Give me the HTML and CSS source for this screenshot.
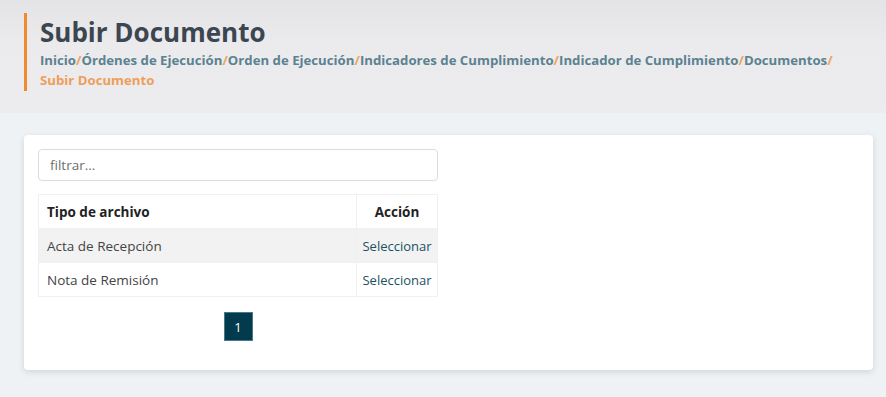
FILE: index.html
```html
<!DOCTYPE html>
<html lang="es">
<head>
  <meta charset="UTF-8" />
  <meta name="viewport" content="width=device-width, initial-scale=1.0"/>
  <title>Subir Documento</title>
  <link rel="stylesheet" href="styles.css">
</head>
<body>

  <div class="page-header">
    <div class="title-block">
      <h1>Subir Documento</h1>
      <div class="breadcrumb">
        <a href="#">Inicio</a><span class="sep">/</span><a href="#">Órdenes de Ejecución</a><span class="sep">/</span><a href="#">Orden de Ejecución</a><span class="sep">/</span><a href="#">Indicadores de Cumplimiento</a><span class="sep">/</span><a href="#">Indicador de Cumplimiento</a><span class="sep">/</span><a href="#">Documentos</a><span class="sep">/</span>
        <span class="current">Subir Documento</span>
      </div>
    </div>
  </div>

  <div class="content">
    <div class="card">
      <div class="list-box">
        <input class="filter" type="text" placeholder="filtrar..." />

        <table class="files">
          <thead>
            <tr>
              <th>Tipo de archivo</th>
              <th class="action">Acción</th>
            </tr>
          </thead>
          <tbody>
            <tr class="striped">
              <td>Acta de Recepción</td>
              <td class="action"><a href="#">Seleccionar</a></td>
            </tr>
            <tr>
              <td>Nota de Remisión</td>
              <td class="action"><a href="#">Seleccionar</a></td>
            </tr>
          </tbody>
        </table>

        <div class="pager">
          <span class="page active">1</span>
        </div>
      </div>
    </div>
  </div>

</body>
</html>
```

FILE: styles.css
```css
body {
  margin: 0;
  font-family: "Open Sans", "Noto Sans", sans-serif;
  background: #eef2f5;
  color: #444;
}

.page-header {
  background: linear-gradient(#e4e4e6, #ebebed 40%, #ececee);
  padding: 13px 24px 22px;
}

.title-block {
  border-left: 3px solid #f08a2c;
  padding: 2px 0 1px 13px;
}

.title-block h1 {
  margin: 0;
  font-size: 26px;
  line-height: 35px;
  font-weight: 700;
  color: #3c4650;
}

.breadcrumb {
  font-size: 13.2px;
  font-weight: 700;
  line-height: 20px;
}

.breadcrumb a {
  color: #5b8290;
  text-decoration: none;
}

.breadcrumb .sep {
  color: #f0a45e;
}

.breadcrumb .current {
  color: #ee9e58;
  white-space: nowrap;
}

.content {
  padding: 22px 13px 28px 24px;
}

.card {
  background: #fff;
  border-radius: 4px;
  box-shadow: 0 2px 6px rgba(0, 0, 0, 0.12);
  padding: 14px 14px 29px;
}

.list-box {
  width: 400px;
}

.filter {
  display: block;
  box-sizing: border-box;
  width: 100%;
  height: 32px;
  padding: 4px 11px;
  border: 1px solid #dcdcdc;
  border-radius: 4px;
  font-family: inherit;
  font-size: 13.5px;
  color: #444;
  outline: none;
}

.filter::placeholder {
  color: #6e6e6e;
}

.files {
  width: 100%;
  margin-top: 13px;
  border-collapse: collapse;
  table-layout: fixed;
  font-size: 13.5px;
}

.files th,
.files td {
  border: 1px solid #f0f0f0;
  padding: 0 8px;
  height: 33px;
  text-align: left;
}

.files th {
  color: #222;
  font-weight: 700;
}

.files .action {
  width: 80px;
  padding: 0;
  text-align: center;
  white-space: nowrap;
}

.files td.action {
  font-size: 13px;
}

.files tr.striped td {
  background: #f2f2f2;
}

.files a {
  color: #1b5163;
  text-decoration: none;
}

.pager {
  display: flex;
  justify-content: center;
  margin-top: 15px;
}

.page {
  width: 29px;
  height: 29px;
  display: flex;
  align-items: center;
  justify-content: center;
  font-size: 13px;
  color: #fff;
  background: #023a4e;
  border: 1px solid #4a7889;
  box-sizing: border-box;
}
```
